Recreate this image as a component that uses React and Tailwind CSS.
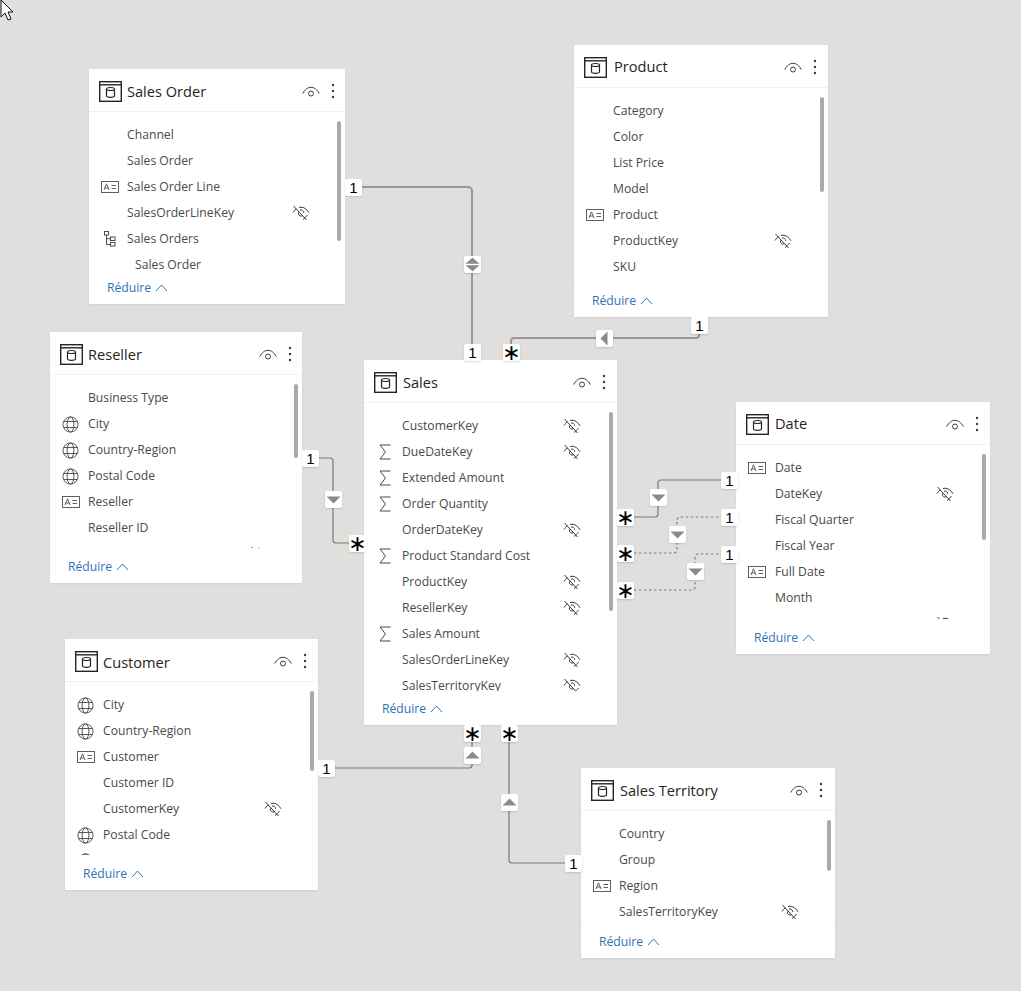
import React from "react";

const TableIcon = () => (
  <svg width="23" height="21" viewBox="0 0 23 21" fill="none" stroke="#252423" strokeWidth="1.4" className="mt-[2px] shrink-0">
    <rect x="0.7" y="0.7" width="21.6" height="19.6" />
    <path d="M1 3.800h21" />
    <ellipse cx="11.5" cy="8" rx="4" ry="1.500" strokeWidth="1.200" />
    <path d="M7.500 8v6.800c0 .9 1.800 1.500 4 1.500s4-.6 4-1.500V8" strokeWidth="1.200" />
  </svg>
);

const Eye = () => (
  <svg width="18" height="12" viewBox="0 0 18 12" fill="none" stroke="#3b3a39" strokeWidth="1" className="shrink-0">
    <path d="M.7 7.500C3 3.300 6 1.300 9 1.300s6 2 8.300 6.200" />
    <circle cx="9" cy="7.500" r="2.500" />
  </svg>
);

const Kebab = () => (
  <svg width="4" height="16" viewBox="0 0 4 16" fill="#3b3a39">
    <circle cx="2" cy="2" r="1.200" />
    <circle cx="2" cy="8" r="1.200" />
    <circle cx="2" cy="14" r="1.200" />
  </svg>
);

const HiddenEye = () => (
  <svg width="18" height="16" viewBox="0 0 18 16" fill="none" stroke="#3b3a39" strokeWidth="1">
    <path d="M1 7.500C2 5.800 3.200 4.600 4.400 3.800M7 2.500c.7-.2 1.300-.3 2-.3 3 0 6 2 8 5.600" />
    <path d="M1.500 1l13 14" />
    <path d="M6.600 7.400a2.700 2.700 0 0 0 4.200 3.100M8 5.200a2.700 2.700 0 0 1 3.700 2.700" />
    <path d="M11 14.500c1.500-1 3-2.500 4.500-4.500" />
  </svg>
);

const IdIcon = () => (
  <svg width="18" height="12" viewBox="0 0 18 12" fill="none" stroke="#605e5c" strokeWidth="1">
    <rect x="0.5" y="0.500" width="17" height="11" />
    <path d="M3 9l2.500-6.200L8 9M3.800 7h3.400" />
    <path d="M10.500 4.500h4.500M10.500 7.500h4.500" />
  </svg>
);

const SigmaIcon = () => (
  <svg width="12" height="16" viewBox="0 0 12 16" fill="none" stroke="#4a4a4a" strokeWidth="1">
    <path d="M11.500 1H1l5.500 7L1 15h10.500" />
  </svg>
);

const GlobeIcon = () => (
  <svg width="17" height="17" viewBox="0 0 18 18" fill="none" stroke="#4a4a4a" strokeWidth="1">
    <circle cx="9" cy="9" r="8" />
    <ellipse cx="9" cy="9" rx="3.600" ry="8" />
    <path d="M1.800 5.800h14.400M1.800 12.200h14.400" />
  </svg>
);

const HierarchyIcon = () => (
  <svg width="12" height="16" viewBox="0 0 12 16" fill="none" stroke="#4a4a4a" strokeWidth="1">
    <rect x="0.500" y="0.500" width="4" height="3.500" />
    <rect x="6.500" y="6" width="4.500" height="3.500" />
    <rect x="6.500" y="11.500" width="4.500" height="3.500" />
    <path d="M2.500 4v9.500h4M2.500 7.700h4" />
  </svg>
);

const icons = { id: IdIcon, sigma: SigmaIcon, globe: GlobeIcon, tree: HierarchyIcon };

const Row = ({ name, icon, hidden, indent, cols }) => {
  const Icon = icons[icon];
  return (
    <div className={`grid h-[26px] shrink-0 items-center ${cols}`}>
      <div className="flex justify-center pl-[3px]">{Icon && <Icon />}</div>
      <span className={`whitespace-nowrap text-[12.2px] text-[#4b4a49] ${indent ? "pl-[8px]" : ""}`}>{name}</span>
      {hidden && <HiddenEye />}
    </div>
  );
};

const Card = ({ title, pos, bar, fields, footer = "h-[35px]", cols = "grid-cols-[38px_162px_18px]", titleGap = "ml-[5px]", headerPr = "pr-[11px]", titleTop = "pt-[2px]" }) => (
  <div className={`absolute flex flex-col overflow-hidden bg-white shadow-[0_1px_2px_rgba(0,0,0,0.07)] ${pos}`}>
    <div className={`flex h-[43px] shrink-0 items-center border-b border-[#f1f1f1] pl-[10px] pt-[1px] ${headerPr}`}>
      <TableIcon />
      <span className={`flex-1 whitespace-nowrap text-[14.6px] font-medium text-[#252423] ${titleGap} ${titleTop}`}>{title}</span>
      <span className="flex pt-[2px]">
        <Eye />
      </span>
      <span className="ml-[11px] flex">
        <Kebab />
      </span>
    </div>
    <div className="flex min-h-0 flex-1 flex-col overflow-hidden pt-[10px]">
      {fields.map((f) => (
        <Row key={f.name + (f.indent ? "-sub" : "")} cols={cols} {...f} />
      ))}
    </div>
    <div className={`flex shrink-0 items-end gap-[4px] border-t border-[#fafafa] pb-[7px] pl-[18px] text-[12.2px] text-[#2f72b7] ${footer}`}>
      Réduire
      <svg width="13" height="8" viewBox="0 0 13 8" fill="none" stroke="#2f72b7" strokeWidth="1" className="mb-[5px]">
        <path d="M1 7l5.500-6L12 7" />
      </svg>
    </div>
    <div className={`absolute right-[4px] top-[52px] w-[4.500px] rounded-full bg-[#a9a9a9] ${bar}`} />
  </div>
);

const Badge = ({ pos, children }) => (
  <div className={`absolute flex h-[17px] w-[17px] items-center justify-center rounded-[2px] bg-white text-[15px] leading-none text-black shadow-[0_1px_2px_rgba(0,0,0,0.15)] ${pos}`}>
    {children}
  </div>
);

const One = ({ pos }) => (
  <Badge pos={pos}>
    <span className="font-['Liberation_Sans',sans-serif]">1</span>
  </Badge>
);

const Star = ({ pos }) => (
  <Badge pos={pos}>
    <span className="font-['DejaVu_Sans',sans-serif] text-[22px] font-normal">∗</span>
  </Badge>
);

const Arrow = ({ pos, dir }) => (
  <Badge pos={pos}>
    <svg width="15" height="15" viewBox="0 0 15 15" fill="#8a8a8a">
      {dir === "down" && <path d="M.5 4.500h14L7.500 11.500z" />}
      {dir === "up" && <path d="M.5 10.500h14L7.500 3.500z" />}
      {dir === "left" && <path d="M10.500 .5v14L3.500 7.500z" />}
      {dir === "both" && <path d="M.5 6.700h14L7.500 .7zM.5 8.300h14L7.500 14.300z" />}
    </svg>
  </Badge>
);

const salesOrder = [
  { name: "Channel" },
  { name: "Sales Order" },
  { name: "Sales Order Line", icon: "id" },
  { name: "SalesOrderLineKey", hidden: true },
  { name: "Sales Orders", icon: "tree" },
  { name: "Sales Order", indent: true },
];

const product = [
  { name: "Category" },
  { name: "Color" },
  { name: "List Price" },
  { name: "Model" },
  { name: "Product", icon: "id" },
  { name: "ProductKey", hidden: true },
  { name: "SKU" },
];

const reseller = [
  { name: "Business Type" },
  { name: "City", icon: "globe" },
  { name: "Country-Region", icon: "globe" },
  { name: "Postal Code", icon: "globe" },
  { name: "Reseller", icon: "id" },
  { name: "Reseller ID" },
  { name: "", hidden: true },
];

const sales = [
  { name: "CustomerKey", hidden: true },
  { name: "DueDateKey", icon: "sigma", hidden: true },
  { name: "Extended Amount", icon: "sigma" },
  { name: "Order Quantity", icon: "sigma" },
  { name: "OrderDateKey", hidden: true },
  { name: "Product Standard Cost", icon: "sigma" },
  { name: "ProductKey", hidden: true },
  { name: "ResellerKey", hidden: true },
  { name: "Sales Amount", icon: "sigma" },
  { name: "SalesOrderLineKey", hidden: true },
  { name: "SalesTerritoryKey", hidden: true },
];

const date = [
  { name: "Date", icon: "id" },
  { name: "DateKey", hidden: true },
  { name: "Fiscal Quarter" },
  { name: "Fiscal Year" },
  { name: "Full Date", icon: "id" },
  { name: "Month" },
  { name: "", hidden: true },
];

const customer = [
  { name: "City", icon: "globe" },
  { name: "Country-Region", icon: "globe" },
  { name: "Customer", icon: "id" },
  { name: "Customer ID" },
  { name: "CustomerKey", hidden: true },
  { name: "Postal Code", icon: "globe" },
  { name: "", icon: "globe" },
];

const territory = [
  { name: "Country" },
  { name: "Group" },
  { name: "Region", icon: "id" },
  { name: "SalesTerritoryKey", hidden: true },
];

export default function App() {
  return (
    <div className="relative h-[991px] w-[1021px] overflow-hidden bg-[#e1dfdd] font-['Open_Sans',sans-serif]">
      {/* relationship lines */}
      <svg width="1021" height="991" viewBox="0 0 1021 991" fill="none" className="absolute left-0 top-0">
        <g stroke="#989898" strokeWidth="2">
          <path d="M362 187H468a4 4 0 0 1 4 4V345" />
          <path d="M511 345V341a3 3 0 0 1 3-3H696a3 3 0 0 0 3-3V326" />
        </g>
        <g stroke="#7a7a7a" strokeWidth="1.200">
          <path d="M319 458H330a3 3 0 0 1 3 3V540a3 3 0 0 0 3 3H349" />
          <path d="M634 517H655a3 3 0 0 0 3-3V483a3 3 0 0 1 3-3H721" />
          <path d="M333 768H469a3 3 0 0 0 3-3V741" />
          <path d="M509 741V860a3 3 0 0 0 3 3H565" />
        </g>
        <g stroke="#7d7d7d" strokeWidth="1.200" strokeDasharray="2.500 2.500">
          <path d="M634 553H674a3 3 0 0 0 3-3V520a3 3 0 0 1 3-3H721" />
          <path d="M634 590H692a3 3 0 0 0 3-3V557a3 3 0 0 1 3-3H721" />
        </g>
      </svg>

      <Card title="Sales Order" pos="left-[89px] top-[69px] h-[235px] w-[256px]" bar="h-[120px]" fields={salesOrder} footer="h-[27px]" cols="grid-cols-[38px_165px_18px]" headerPr="pr-[10px]" />
      <Card title="Product" pos="left-[574px] top-[45px] h-[272px] w-[254px]" bar="h-[95px]" fields={product} cols="grid-cols-[39px_161px_18px]" titleGap="ml-[7px]" titleTop="pt-0" />
      <Card title="Reseller" pos="left-[50px] top-[332px] h-[251px] w-[252px]" bar="h-[74px]" fields={reseller} headerPr="pr-[10px]" />
      <Card title="Sales" pos="left-[364px] top-[360px] h-[365px] w-[253px]" bar="h-[199px]" fields={sales} footer="h-[34px]" cols="grid-cols-[38px_161px_18px]" titleGap="ml-[6px]" />
      <Card title="Date" pos="left-[736px] top-[402px] h-[252px] w-[254px]" bar="h-[86px]" fields={date} cols="grid-cols-[39px_161px_18px]" titleGap="ml-[6px]" titleTop="pt-0" />
      <Card title="Customer" pos="left-[65px] top-[639px] h-[251px] w-[253px]" bar="h-[80px]" fields={customer} cols="grid-cols-[38px_161px_18px]" titleTop="pt-[4px]" />
      <Card title="Sales Territory" pos="left-[581px] top-[768px] h-[190px] w-[254px]" bar="h-[51px]" fields={territory} titleGap="ml-[6px]" headerPr="pr-[12px]" />

      <One pos="left-[345px] top-[179px]" />
      <Arrow pos="left-[464px] top-[256px]" dir="both" />
      <One pos="left-[464px] top-[344px]" />
      <Star pos="left-[503px] top-[344px]" />
      <Arrow pos="left-[596px] top-[330px]" dir="left" />
      <One pos="left-[691px] top-[317px]" />

      <One pos="left-[302px] top-[450px]" />
      <Arrow pos="left-[325px] top-[491px]" dir="down" />
      <Star pos="left-[349px] top-[535px]" />

      <Star pos="left-[617px] top-[509px]" />
      <Star pos="left-[617px] top-[545px]" />
      <Star pos="left-[617px] top-[582px]" />
      <Arrow pos="left-[650px] top-[489px]" dir="down" />
      <Arrow pos="left-[669px] top-[526px]" dir="down" />
      <Arrow pos="left-[687px] top-[563px]" dir="down" />
      <One pos="left-[721px] top-[472px]" />
      <One pos="left-[721px] top-[509px]" />
      <One pos="left-[721px] top-[546px]" />

      <One pos="left-[318px] top-[760px]" />
      <Star pos="left-[464px] top-[725px]" />
      <Arrow pos="left-[464px] top-[747px]" dir="up" />
      <Star pos="left-[501px] top-[725px]" />
      <Arrow pos="left-[501px] top-[794px]" dir="up" />
      <One pos="left-[565px] top-[855px]" />

      {/* mouse pointer */}
      <svg width="14" height="22" viewBox="0 0 14 22" className="absolute left-0 top-0">
        <path d="M1 0v17l4-4 3 7 3-1-3-7h5z" fill="#fff" stroke="#111" strokeWidth="1" />
      </svg>
    </div>
  );
}
